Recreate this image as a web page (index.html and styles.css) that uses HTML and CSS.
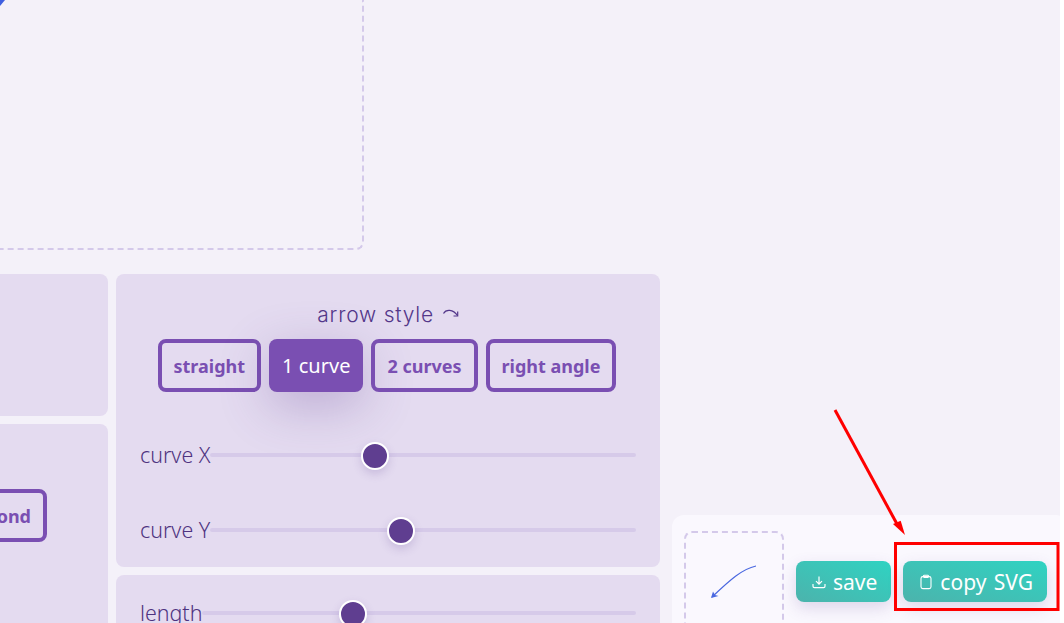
FILE: index.html
```html
<!DOCTYPE html>
<html>
<head>
  <title>SVG arrow generator</title>
  <link rel="stylesheet" href="styles.css">
</head>
<body>

<div class="page">
  <div class="main">
    <div class="canvas-row">
      <div class="canvas">
        <svg class="canvas-arrow" width="8" height="8" viewBox="0 0 8 8"><path d="M0 6 L5 0 L0 0 Z" fill="#3f5fe0"/></svg>
      </div>
    </div>

    <div class="controls">
      <div class="col col-left">
        <div class="panel panel-top"></div>
        <div class="panel panel-head">
          <button class="opt">diamond</button>
        </div>
      </div>

      <div class="col col-right">
        <div class="panel panel-style">
          <div class="panel-title">arrow style <svg class="curl" width="17" height="12" viewBox="0 0 17 12" fill="none" stroke="currentColor" stroke-width="1.2"><path d="M1.5 6.5 C4 2 11 2 15.5 8.5"/><path d="M15.7 4.5 V9 H11.5"/></svg></div>
          <div class="opts">
            <button class="opt">straight</button>
            <button class="opt on">1 curve</button>
            <button class="opt">2 curves</button>
            <button class="opt">right angle</button>
          </div>
          <div class="slider-row row-x">
            <span class="slider-label">curve X</span>
            <div class="track"><span class="knob knob-x"></span></div>
          </div>
          <div class="slider-row row-y">
            <span class="slider-label">curve Y</span>
            <div class="track"><span class="knob knob-y"></span></div>
          </div>
        </div>
        <div class="panel panel-size">
          <div class="slider-row">
            <span class="slider-label">length</span>
            <div class="track"><span class="knob knob-len"></span></div>
          </div>
        </div>
      </div>
    </div>
  </div>

  <div class="side">
    <div class="export">
      <div class="preview">
        <svg width="60" height="50" viewBox="0 0 60 50">
          <path d="M52 10 C38 13 26 24 8 41" fill="none" stroke="#4a68e0" stroke-width="1.2"/>
          <path d="M7 42 L9 35.5 L11 39 L14.5 40 Z" fill="#4a68e0"/>
        </svg>
      </div>
      <button class="btn">
        <svg width="16" height="16" viewBox="0 0 16 16" fill="none" stroke="currentColor" stroke-width="1.2"><path d="M8 2.5 V10 M5 7.2 L8 10.2 L11 7.2 M2 10 V12.2 Q2 13.6 3.4 13.6 H12.6 Q14 13.6 14 12.2 V10"/></svg>
        save
      </button>
      <button class="btn">
        <svg width="16" height="16" viewBox="0 0 16 16" fill="none" stroke="currentColor" stroke-width="1.1"><rect x="3" y="2.6" width="10" height="12" rx="1.8"/><rect x="5.6" y="1.2" width="4.8" height="2.2" rx=".6"/></svg>
        copy SVG
      </button>
    </div>
  </div>

  <svg class="callout" width="240" height="223" viewBox="0 0 240 223">
    <path d="M5 10 L67 124" fill="none" stroke="#f00" stroke-width="3"/>
    <path d="M75 135 L63 124 L70.7 120.7 Z" fill="#f00"/>
    <rect x="65.5" y="143.5" width="162.5" height="66" fill="none" stroke="#f00" stroke-width="3"/>
  </svg>
</div>

</body>
</html>
```

FILE: styles.css
```css
* { box-sizing: border-box; }
html, body { height: 100%; }
body { margin: 0; background: #fff; font-family: "Noto Sans", sans-serif; color: #5c3d8f; overflow: hidden; }

.page { position: relative; width: 1060px; height: 623px; background: #f4f1f9; overflow: hidden; display: flex; }
.main { width: 672px; flex: none; margin-left: -252px; min-width: 924px; }

.canvas-row { height: 274px; }
.canvas { position: relative; width: 616px; height: 250px; border: 2px dashed #d4c9ea; border-top: 0; border-radius: 0 0 8px 8px; }
.canvas-arrow { position: absolute; top: 0; left: 250px; }

.controls { display: flex; gap: 8px; }
.col { display: flex; flex-direction: column; gap: 8px; }
.col-left { width: 360px; }
.col-right { width: 544px; }

.panel { background: #e4dbf0; border-radius: 8px; }
.panel-top { height: 142px; }
.panel-head { height: 300px; padding: 65px 61px 0 0; display: flex; justify-content: flex-end; align-items: flex-start; }
.panel-style { height: 293px; padding: 25px 24px 0; }
.panel-size { height: 100px; padding: 0 24px; }
.panel-size .slider-row { margin-top: 24px; }

.panel-title { font-family: "Inter", sans-serif; font-weight: 300; font-size: 21px; line-height: 32px; text-align: center; color: #53378a; letter-spacing: .8px; }
.curl { vertical-align: 3px; margin-left: 1px; }

.opts { display: flex; justify-content: center; gap: 8px; margin: 8px 0 0 -2px; }
.opt { height: 53px; padding: 0 12px; background: transparent; border: 4px solid #7a4fb2; border-radius: 8px; color: #7a4fb2; font-family: "Noto Sans", sans-serif; font-weight: 700; font-size: 18px; }
.opt.on { padding: 0 13px; border: 0; background: #7a4fb2; color: #fff; font-weight: 400; font-size: 20px; box-shadow: 0 14px 50px rgba(92,61,143,.3); }

.slider-row { display: flex; align-items: center; height: 30px; }
.row-x { margin-top: 49px; }
.row-y { margin-top: 45px; }
.slider-label { flex: none; margin-bottom: 4px; font-size: 21.4px; font-weight: 300; color: #4e3380; }
.track { position: relative; flex: 1; height: 4px; margin-top: -2px; background: #d6cae9; border-radius: 2px; }
.knob { position: absolute; top: -11px; width: 28px; height: 28px; background: #5f3e90; border: 2px solid #fff; border-radius: 50%; box-shadow: 0 4px 10px rgba(92,61,143,.2); }
.knob-x { left: 151px; }
.knob-y { left: 177px; }
.knob-len { left: 137px; }

.side { flex: 1; position: relative; }
.export { position: absolute; left: 0; right: -8px; top: 515px; height: 140px; background: #faf8fe; border-radius: 12px; padding: 16px 12px; display: flex; gap: 12px; align-items: flex-start; }
.preview { flex: none; width: 100px; height: 110px; border: 2px dashed #d4c9ea; border-radius: 8px; padding-top: 23px; display: flex; justify-content: center; }
.btn { display: flex; align-items: center; gap: 6px; height: 41px; margin-top: 30px; padding: 0 14px 0 15px; border: 0; border-radius: 8px; background: linear-gradient(to right top, #4cb3ac, #2fd3c2); color: #fff; font-family: "Noto Sans", sans-serif; font-size: 21px; word-spacing: 2px; box-shadow: 0 6px 16px rgba(92,61,143,.18); }

.callout { position: absolute; left: 830px; top: 400px; pointer-events: none; }
```
